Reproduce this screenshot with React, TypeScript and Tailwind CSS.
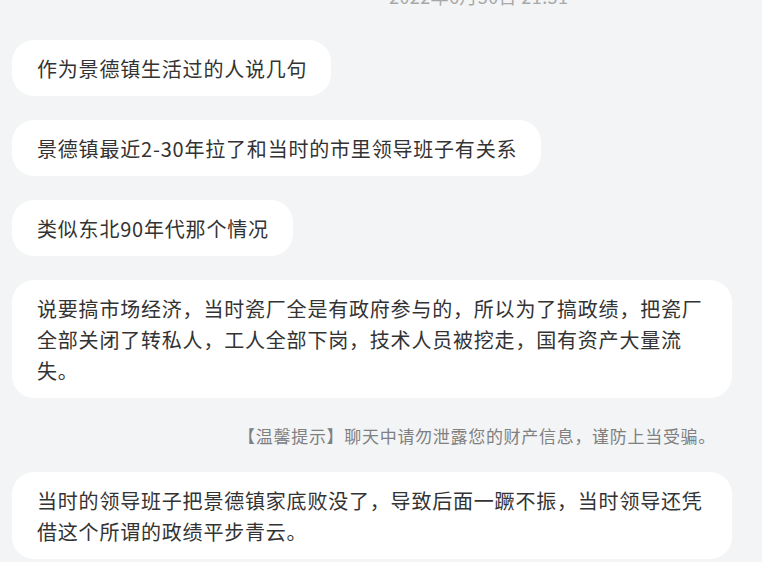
import React from "react";

const font = { fontFamily: '"Noto Sans CJK SC", "Noto Sans", sans-serif' };

function Bubble({ children }: { children: React.ReactNode }) {
  return (
    <div className="self-start max-w-[720px] bg-white rounded-[22px] pl-[25px] pr-[24px] pt-[13px] pb-[12px] text-[20px] leading-[31px] tracking-[0.8px] text-[#333333]">
      {children}
    </div>
  );
}

export default function App() {
  return (
    <div
      className="w-[762px] h-[562px] overflow-hidden bg-[#f3f4f6] flex flex-col"
      style={font}
    >
      <div className="h-[40px] relative">
        <div className="absolute left-[389px] top-[-17px] text-[18px] tracking-[0.4px] text-[#a8a8a8] leading-[26px] whitespace-nowrap">
          2022年6月30日 21:31
        </div>
      </div>
      <div className="flex flex-col gap-[24px] px-[12px]">
        <Bubble>作为景德镇生活过的人说几句</Bubble>
        <Bubble>景德镇最近2-30年拉了和当时的市里领导班子有关系</Bubble>
        <Bubble>类似东北90年代那个情况</Bubble>
        <div className="bg-white rounded-[22px] pl-[25px] pr-[22px] pt-[13px] pb-[12px] text-[20px] leading-[31px] tracking-[0.8px] text-[#333333] w-[720px]">
          说要搞市场经济，当时瓷厂全是有政府参与的，所以为了搞政绩，把瓷厂全部关闭了转私人，工人全部下岗，技术人员被挖走，国有资产大量流失。
        </div>
      </div>
      <div className="mt-[26px] mb-[24px] pr-[46px] text-right text-[17px] leading-[24px] tracking-[0.7px] text-[#808080] whitespace-nowrap">
        【温馨提示】聊天中请勿泄露您的财产信息，谨防上当受骗。
      </div>
      <div className="px-[12px]">
        <div className="bg-white rounded-[22px] pl-[25px] pr-[22px] pt-[13px] pb-[12px] text-[20px] leading-[31px] tracking-[0.8px] text-[#333333] w-[720px]">
          当时的领导班子把景德镇家底败没了，导致后面一蹶不振，当时领导还凭借这个所谓的政绩平步青云。
        </div>
      </div>
    </div>
  );
}
